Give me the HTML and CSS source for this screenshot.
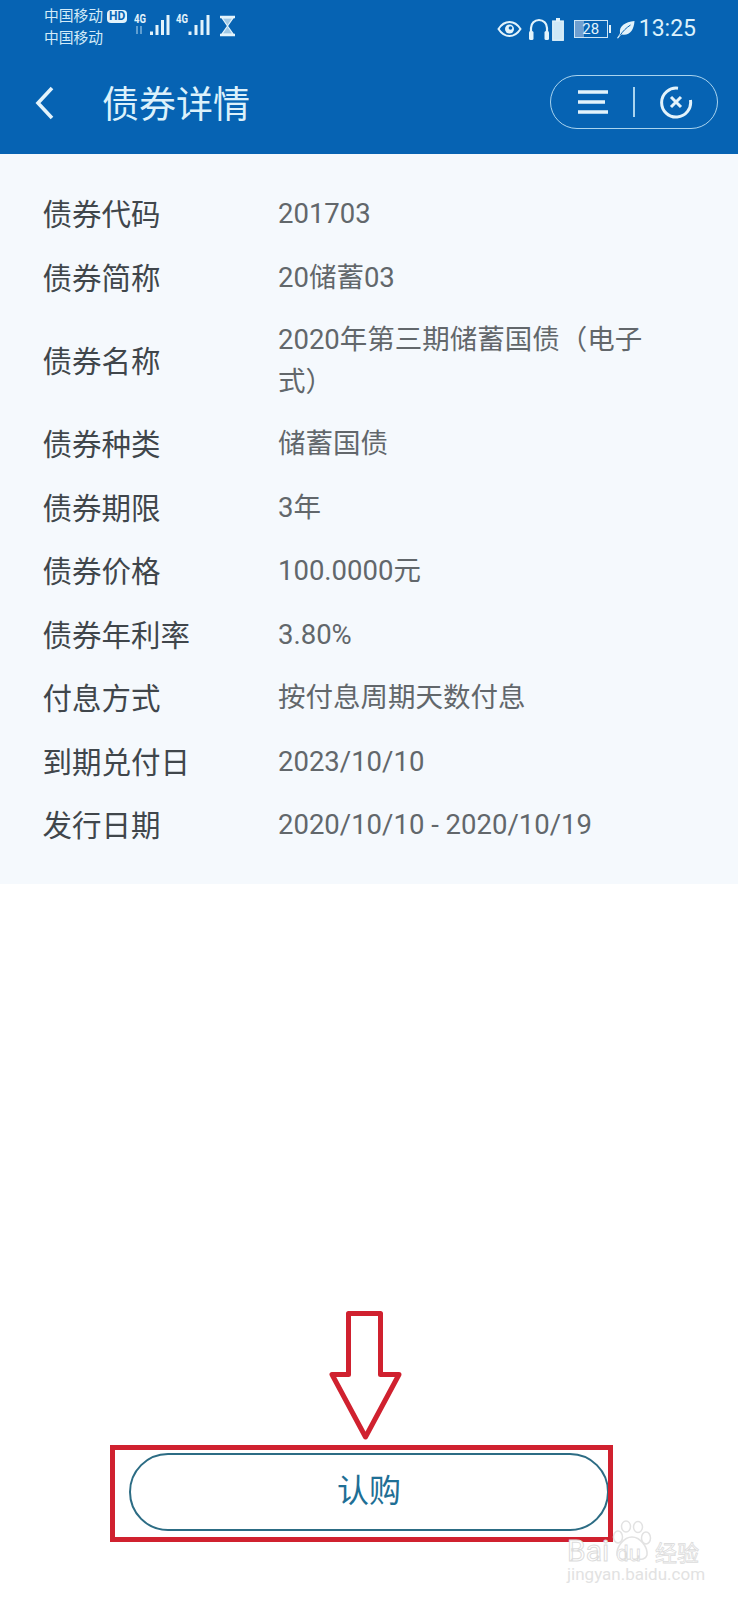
FILE: index.html
```html
<!DOCTYPE html>
<html lang="zh-CN">
<head>
<meta charset="utf-8">
<title>债券详情</title>
<link rel="stylesheet" href="styles.css">
</head>
<body>
<div class="app">
  <header class="top">
    <div class="status">
      <div class="carriers">
        <div class="carrier-line">中国移动<span class="hd">HD</span></div>
        <div class="carrier-line">中国移动</div>
      </div>
      <svg class="signals" width="104" height="30" viewBox="0 0 104 30">
        <text x="0" y="14" class="net" textLength="12" lengthAdjust="spacingAndGlyphs">4G</text>
        <path d="M3 17v8M7 17v8" stroke="#7fb4dc" stroke-width="1.500"/>
        <g fill="#e3f3fb">
          <rect x="16" y="22.500" width="3" height="3.500"/><rect x="21.500" y="16" width="3" height="10"/><rect x="27" y="11" width="3" height="15"/><rect x="32.500" y="6" width="3" height="20"/>
        </g>
        <text x="42" y="14" class="net" textLength="12" lengthAdjust="spacingAndGlyphs">4G</text>
        <g fill="#e3f3fb">
          <rect x="54.500" y="22.500" width="3" height="3.500"/><rect x="60.500" y="16" width="3" height="10"/><rect x="66.500" y="11" width="3" height="15"/><rect x="72.500" y="6" width="3" height="20"/>
        </g>
        <path d="M86 8h15M86 26h15" stroke="#e3f3fb" stroke-width="2.400"/>
        <path d="M88 9l5.500 8 5.500-8zM93.500 17l-5.500 8h11z" fill="#e3f3fb" fill-opacity=".7" stroke="#e3f3fb" stroke-width="1.200"/>
      </svg>
      <div class="status-right">
        <svg width="25" height="18" viewBox="0 0 25 18"><path d="M1.500 9C5 3.500 9 2 12.500 2S20 3.500 23.500 9C20 14.500 16 16 12.500 16S5 14.500 1.500 9z" fill="none" stroke="#e3f3fb" stroke-width="2"/><circle cx="12.500" cy="9" r="4.500" fill="#e3f3fb"/><circle cx="13.500" cy="8" r="1.800" fill="#0663b3"/></svg>
        <svg class="gap-s" width="22" height="24" viewBox="0 0 22 24"><path d="M3 15V11a8 8 0 0 1 16 0v4" fill="none" stroke="#e3f3fb" stroke-width="2.200"/><rect x="1" y="14" width="4.500" height="9" rx="1.500" fill="#e3f3fb"/><rect x="16.500" y="14" width="4.500" height="9" rx="1.500" fill="#e3f3fb"/></svg>
        <svg class="gap-xs" width="12" height="23" viewBox="0 0 12 23"><rect x="4" y="0" width="4" height="3" fill="#e3f3fb"/><rect x=".7" y="3" width="10.600" height="19.300" fill="#cfe8f7" stroke="#e3f3fb" stroke-width="1.200"/></svg>
        <div class="batt"><span class="batt-num">28</span></div>
        <span class="batt-tip"></span>
        <svg class="gap-xs" width="19" height="19" viewBox="0 0 19 19"><path d="M1 18C2.500 16 3.500 14.500 4 13 3 6 9 2 18.500 1 18 10 13.500 16 6 14.500 4.500 15.500 3 17 2 18.500z" fill="#e3f3fb"/><path d="M4 15.500C7 11 10 8 14.500 5" fill="none" stroke="#0663b3" stroke-width="1"/></svg>
        <span class="time">13:25</span>
      </div>
    </div>
    <nav class="nav">
      <svg class="back" width="20" height="34" viewBox="0 0 20 34"><path d="M17 2L3 17l14 15" fill="none" stroke="#e3f3fb" stroke-width="3.600"/></svg>
      <h1 class="title">债券详情</h1>
      <div class="capsule">
        <svg width="32" height="26" viewBox="0 0 32 26"><path d="M1 3h30M1 13h27M1 23h30" stroke="#e3f3fb" stroke-width="3.600"/></svg>
        <span class="cap-div"></span>
        <svg width="34" height="34" viewBox="0 0 34 34"><path d="M19 3.200A14.500 14.500 0 1 0 31.400 15" fill="none" stroke="#e3f3fb" stroke-width="3"/><path d="M12 12l10 10M22 12L12 22" stroke="#e3f3fb" stroke-width="3"/></svg>
      </div>
    </nav>
  </header>

  <section class="panel">
    <div class="row"><div class="k">债券代码</div><div class="v">201703</div></div>
    <div class="row"><div class="k">债券简称</div><div class="v">20储蓄03</div></div>
    <div class="row"><div class="k">债券名称</div><div class="v">2020年第三期储蓄国债（电子式）</div></div>
    <div class="row"><div class="k">债券种类</div><div class="v">储蓄国债</div></div>
    <div class="row"><div class="k">债券期限</div><div class="v">3年</div></div>
    <div class="row"><div class="k">债券价格</div><div class="v">100.0000元</div></div>
    <div class="row"><div class="k">债券年利率</div><div class="v">3.80%</div></div>
    <div class="row"><div class="k">付息方式</div><div class="v">按付息周期天数付息</div></div>
    <div class="row"><div class="k">到期兑付日</div><div class="v">2023/10/10</div></div>
    <div class="row"><div class="k">发行日期</div><div class="v">2020/10/10 - 2020/10/19</div></div>
  </section>

  <div class="foot"><button class="buy">认购</button></div>

  <svg class="arrow" width="82" height="136" viewBox="0 0 82 136"><path d="M21.500 3.500h32v61h18.500L38.500 127 5 64.500h16.500z" fill="#fff" stroke="#d0212f" stroke-width="5" stroke-linejoin="round"/></svg>
  <div class="red-box"></div>
  <div class="mark">
    <svg class="paw" width="42" height="44" viewBox="0 0 42 44"><g fill="#fff" stroke="#e2e2e2" stroke-width="1.500"><ellipse cx="7" cy="17" rx="4.500" ry="6"/><ellipse cx="15" cy="6.500" rx="4.500" ry="5.500"/><ellipse cx="27" cy="7" rx="4.500" ry="5.500"/><ellipse cx="35" cy="18" rx="4.500" ry="6"/><path d="M21 17c8 0 16 10 15 18-2 6-8 4-15 4s-13 2-15-4c-1-8 7-18 15-18z"/></g></svg>
    <div class="mark-top"><span>Bai</span><span class="mark-du">du</span><span class="mark-cn">经验</span></div>
    <div class="mark-url">jingyan.baidu.com</div>
  </div>
</div>
</body>
</html>
```

FILE: styles.css
```css
* { box-sizing: border-box; }
html, body { margin: 0; padding: 0; }
body {
  background: #fff;
  font-family: Roboto, "Noto Sans CJK SC", "Noto Sans", sans-serif;
}
.app {
  position: relative;
  width: 738px;
  height: 1600px;
  display: flex;
  flex-direction: column;
  overflow: hidden;
}
.top {
  background: #0663b3;
  color: #e3f3fb;
  height: 154px;
  flex: none;
}
.status {
  height: 52px;
  padding: 5px 0 0 44px;
  display: flex;
  align-items: flex-start;
}
.carriers { width: 90px; font-size: 14.750px; line-height: 22px; }
.carrier-line { display: flex; align-items: center; white-space: nowrap; height: 22px; color: #d3ebf8; }
.hd {
  margin-left: 4px;
  background: #e3f3fb;
  color: #0663b3;
  font-size: 12px;
  font-weight: 700;
  line-height: 13px;
  padding: 0 2px;
  border-radius: 4px;
}
.signals { margin-top: 4px; flex: none; }
.net { font-size: 12px; font-weight: 700; fill: #e3f3fb; font-family: Roboto, sans-serif; }
.status-right {
  margin-left: auto;
  padding: 2px 42px 0 0;
  display: flex;
  align-items: center;
  height: 46px;
}
.gap-s { margin-left: 6px; }
.gap-xs { margin-left: 2px; }
.batt {
  margin-left: 10px;
  width: 34px;
  height: 18px;
  border: 1px solid #cfe6f5;
  background: linear-gradient(90deg, #6f9fd0 0 28%, transparent 28%);
  display: flex;
  align-items: center;
  justify-content: center;
}
.batt-num { font-size: 15px; line-height: 16px; color: #e3f3fb; }
.batt-tip { width: 2px; height: 8px; background: #e3f3fb; margin: 0 3px 0 1px; }
.time { font-size: 23px; line-height: 26px; margin-left: 4px; color: #dcf1fb; }
.nav {
  height: 102px;
  display: flex;
  align-items: center;
  padding: 0 20px 0 35px;
}
.back { flex: none; }
.title {
  margin: 6px 0 0 47px;
  font-size: 37px;
  line-height: 50px;
  font-weight: 400;
  color: #dcf1fb;
}
.capsule {
  margin: 0 0 2px auto;
  width: 168px;
  height: 54px;
  border: 1.500px solid #a9d4ef;
  border-radius: 27px;
  display: flex;
  align-items: center;
  padding: 0 24px 0 26px;
  justify-content: space-between;
}
.cap-div { width: 1.500px; height: 30px; background: #a9d4ef; }
.panel {
  background: #f5f9fd;
  padding: 29.500px 0 26px;
  flex: none;
}
.row {
  min-height: 63.500px;
  display: flex;
  align-items: center;
  padding: 10.500px 0 10.500px 42.500px;
}
.k {
  width: 235.500px;
  flex: none;
  font-size: 29.500px;
  line-height: 42px;
  color: #40464b;
}
.v {
  width: 375px;
  font-size: 27.500px;
  line-height: 42px;
  color: #62676b;
  margin-top: -2px;
}
.foot {
  margin-top: auto;
  padding: 0 129px 69px 129px;
}
.buy {
  display: block;
  width: 100%;
  height: 78px;
  background: #fff;
  border: 2px solid #2c6c84;
  border-radius: 39px;
  font: inherit;
  font-size: 32px;
  color: #1f6f95;
  padding: 0 0 8px;
}
.arrow { position: absolute; left: 327px; top: 1310px; }
.red-box {
  position: absolute;
  left: 110px;
  top: 1445px;
  width: 503px;
  height: 97px;
  border: 5.500px solid #d0212f;
}
.mark {
  position: absolute;
  left: 567px;
  top: 1520px;
  width: 132px;
  height: 66px;
  color: #fff;
}
.paw { position: absolute; left: 44px; top: 0; }
.mark-top {
  position: absolute;
  left: 0;
  top: 18px;
  width: 132px;
  display: flex;
  align-items: baseline;
  font-size: 30px;
  line-height: 26px;
  white-space: nowrap;
  -webkit-text-stroke: 1px #dcdcdc;
}
.mark-du { font-size: 22px; margin-left: 7px; -webkit-text-stroke: .8px #dcdcdc; }
.mark-cn { font-size: 22px; margin-left: auto; -webkit-text-stroke: .8px #dcdcdc; }
.mark-url {
  position: absolute;
  left: 0;
  top: 44px;
  font-size: 17px;
  line-height: 20px;
  white-space: nowrap;
  color: #e2e2e2;
}
```
